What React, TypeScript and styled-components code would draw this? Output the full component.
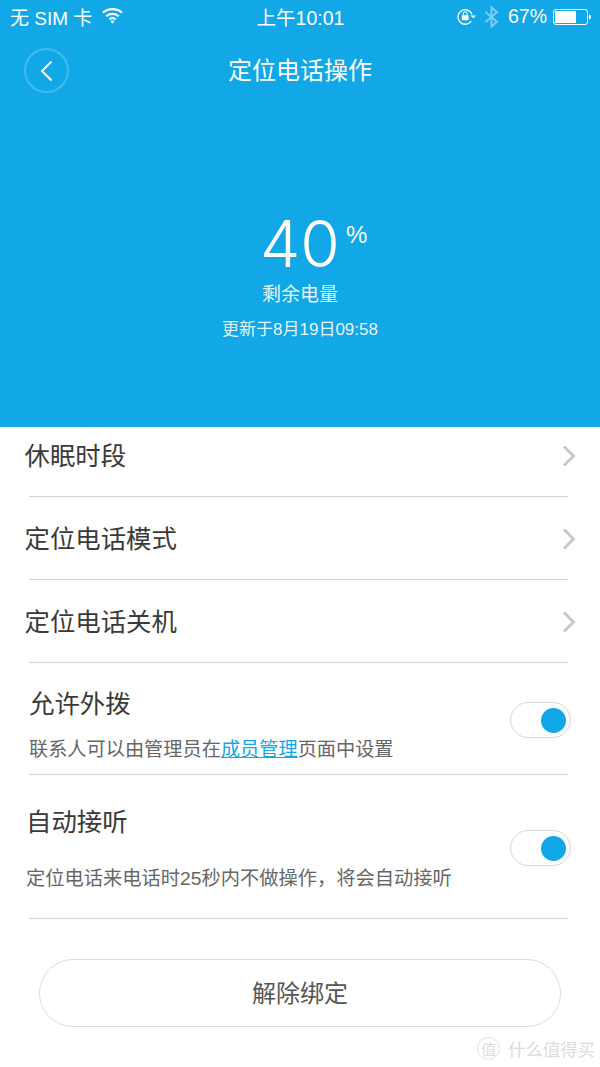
import styled, { createGlobalStyle } from 'styled-components';

const Global = createGlobalStyle`
  html, body {
    margin: 0;
    padding: 0;
    background: #fff;
  }
  body {
    font-family: "Liberation Sans", "Noto Sans CJK SC", sans-serif;
  }
`;

const Page = styled.div`
  position: relative;
  width: 600px;
  height: 1067px;
  overflow: hidden;
  background: #fff;
`;

const Hero = styled.header`
  height: 427px;
  background: #12a7e7;
  color: #fff;
  display: flex;
  flex-direction: column;
  align-items: center;
`;

const StatusBar = styled.div`
  width: 100%;
  box-sizing: border-box;
  height: 33px;
  padding: 0 9px 0 10px;
  display: grid;
  grid-template-columns: 1fr auto 1fr;
  align-items: center;
  font-size: 19.5px;
`;

const StatusLeft = styled.div`
  display: flex;
  align-items: center;
  gap: 10px;
  font-size: 19px;
`;

const StatusRight = styled.div`
  display: flex;
  align-items: center;
  justify-content: flex-end;
`;

const NavBar = styled.div`
  position: relative;
  width: 100%;
  height: 70px;
  display: flex;
  align-items: center;
  justify-content: center;
  font-size: 24px;
`;

const BackButton = styled.div`
  position: absolute;
  left: 24px;
  top: 15px;
  width: 41px;
  height: 41px;
  border: 2px solid rgba(255, 255, 255, 0.22);
  border-radius: 50%;
  display: flex;
  align-items: center;
  justify-content: center;
`;

const Level = styled.div`
  margin-top: 101px;
  position: relative;
  font-family: Inter, "Liberation Sans", sans-serif;
  font-weight: 300;
  font-size: 64px;
  line-height: 80px;
  height: 80px;
`;

const Percent = styled.span`
  position: absolute;
  left: 100%;
  top: 16px;
  margin-left: 6px;
  font-family: "Liberation Sans", sans-serif;
  font-weight: 400;
  font-size: 24px;
  line-height: 30px;
`;

const LevelLabel = styled.div`
  font-size: 19px;
  line-height: 26px;
  color: rgba(255, 255, 255, 0.92);
  margin-top: -2px;
`;

const Updated = styled.div`
  margin-top: 11px;
  font-size: 17px;
  line-height: 22px;
  color: rgba(255, 255, 255, 0.92);
`;

const Row = styled.div<{ $height: number; $left: number; $right: number; $top: number; $bottom: number }>`
  box-sizing: border-box;
  height: ${p => p.$height}px;
  padding: ${p => p.$top}px ${p => p.$right}px ${p => p.$bottom}px ${p => p.$left}px;
  display: flex;
  align-items: center;
  justify-content: space-between;
`;

const Divider = styled.div`
  height: 1px;
  margin: 0 32px 0 29px;
  background: #d4d4d4;
`;

const RowTitle = styled.div`
  font-size: 25.4px;
  line-height: 34px;
  color: #3a3a3a;
`;

const RowText = styled.div<{ $gap: number; $shift: number }>`
  display: flex;
  flex-direction: column;
  gap: ${p => p.$gap}px;
  margin-top: ${p => p.$shift}px;
`;

const RowHint = styled.div<{ $size: number }>`
  font-size: ${p => p.$size}px;
  line-height: 26px;
  color: #666;
  white-space: nowrap;
`;

const HintLink = styled.span`
  color: #12a7e7;
  text-decoration: underline;
`;

const Toggle = styled.div`
  box-sizing: border-box;
  width: 61px;
  height: 36px;
  border: 1px solid #d6d6d6;
  border-radius: 18px;
  display: flex;
  align-items: center;
  justify-content: flex-end;
  padding-right: 4px;
`;

const Knob = styled.div`
  width: 25px;
  height: 25px;
  border-radius: 50%;
  background: #12a7e7;
`;

const Unbind = styled.div`
  box-sizing: border-box;
  height: 68px;
  margin: 40px 39px 0;
  padding-bottom: 3px;
  border: 1px solid #dcdcdc;
  border-radius: 34px;
  display: flex;
  align-items: center;
  justify-content: center;
  font-size: 24px;
  color: #555;
`;

const Watermark = styled.div`
  position: absolute;
  right: 5px;
  bottom: 6px;
  display: flex;
  align-items: center;
  gap: 8px;
  font-size: 17.4px;
  color: #dcdcdc;
`;

const WatermarkBadge = styled.span`
  box-sizing: border-box;
  width: 23px;
  height: 23px;
  border: 1px solid #e4e4e4;
  border-radius: 50%;
  display: flex;
  align-items: center;
  justify-content: center;
  font-size: 15px;
`;

const Wifi = () => (
  <svg width="21" height="17" viewBox="0 0 21 17" fill="none" stroke="#fff" strokeWidth="2.2" style={{ marginBottom: 2 }}>
    <path d="M1 5.800C6 1 15 1 20 5.800" />
    <path d="M4.200 9.200C7.600 6.200 13.400 6.200 16.800 9.200" />
    <path d="M7.400 12.400C9.200 11 11.800 11 13.600 12.400" />
    <path d="M10.500 16.500L8.300 14.200C9.600 13.300 11.400 13.300 12.700 14.200Z" fill="#fff" stroke="none" />
  </svg>
);

const RotationLock = () => (
  <svg width="20" height="17" viewBox="0 0 20 17" fill="none" style={{ marginRight: 7 }}>
    <path d="M14.200 13.200A7.300 7.300 0 1 1 15.100 6.400" stroke="#fff" strokeWidth="1.300" />
    <path d="M13.400 7.400h5.600l-2.800 2.800z" fill="#fff" />
    <rect x="4.800" y="7.200" width="6.800" height="5" rx="0.600" fill="#fff" />
    <path d="M6.300 7.200V5.700a1.900 1.900 0 0 1 3.800 0V7.200" stroke="#fff" strokeWidth="1.100" />
  </svg>
);

const Bluetooth = () => (
  <svg width="15" height="22" viewBox="0 0 15 22" fill="none" stroke="#fff" strokeOpacity="0.45" strokeWidth="2" style={{ marginRight: 9 }}>
    <path d="M1.500 6L13 15.700L7.500 20.500V1.500L13 6.300L1.500 16" />
  </svg>
);

const Battery = () => (
  <svg width="38" height="16" viewBox="0 0 38 16" fill="none" style={{ marginLeft: 6 }}>
    <rect x="0.500" y="0.500" width="34" height="15" rx="2.500" stroke="#fff" />
    <rect x="2" y="2" width="21" height="12" fill="#fff" />
    <path d="M36 5.500c1.300 0 2 1.100 2 2.500s-.7 2.500-2 2.500z" fill="#fff" />
  </svg>
);

const BackIcon = () => (
  <svg width="13" height="22" viewBox="0 0 13 22" fill="none" stroke="#fff" strokeWidth="2">
    <path d="M11.500 1.500L2 11L11.500 20.500" />
  </svg>
);

const Chevron = () => (
  <svg width="14" height="22" viewBox="0 0 14 22" fill="none" stroke="#c8c8c8" strokeWidth="3">
    <path d="M2 1.500L11.500 11L2 20.500" />
  </svg>
);

const SwitchOn = () => (
  <Toggle>
    <Knob />
  </Toggle>
);

const links = [
  { title: '休眠时段', height: 69, top: 0, bottom: 11 },
  { title: '定位电话模式', height: 82, top: 2, bottom: 0 },
  { title: '定位电话关机', height: 82, top: 2, bottom: 0 },
];

export default function App() {
  return (
    <Page>
      <Global />
      <Hero>
        <StatusBar>
          <StatusLeft>
            <span>无 SIM 卡</span>
            <Wifi />
          </StatusLeft>
          <span>上午10:01</span>
          <StatusRight>
            <RotationLock />
            <Bluetooth />
            <span>67%</span>
            <Battery />
          </StatusRight>
        </StatusBar>
        <NavBar>
          <BackButton>
            <BackIcon />
          </BackButton>
          定位电话操作
        </NavBar>
        <Level>
          40
          <Percent>%</Percent>
        </Level>
        <LevelLabel>剩余电量</LevelLabel>
        <Updated>更新于8月19日09:58</Updated>
      </Hero>
      {links.map(link => (
        <div key={link.title}>
          <Row $height={link.height} $left={24.5} $right={24} $top={link.top} $bottom={link.bottom}>
            <RowTitle>{link.title}</RowTitle>
            <Chevron />
          </Row>
          <Divider />
        </div>
      ))}
      <Row $height={111} $left={29} $right={29} $top={3} $bottom={0}>
        <RowText $gap={16} $shift={9}>
          <RowTitle>允许外拨</RowTitle>
          <RowHint $size={19.2}>
            联系人可以由管理员在<HintLink>成员管理</HintLink>页面中设置
          </RowHint>
        </RowText>
        <SwitchOn />
      </Row>
      <Divider />
      <Row $height={143} $left={26} $right={29} $top={3} $bottom={0}>
        <RowText $gap={27} $shift={0}>
          <RowTitle>自动接听</RowTitle>
          <RowHint $size={19.25}>定位电话来电话时25秒内不做操作，将会自动接听</RowHint>
        </RowText>
        <SwitchOn />
      </Row>
      <Divider />
      <Unbind>解除绑定</Unbind>
      <Watermark>
        <WatermarkBadge>值</WatermarkBadge>
        什么值得买
      </Watermark>
    </Page>
  );
}
